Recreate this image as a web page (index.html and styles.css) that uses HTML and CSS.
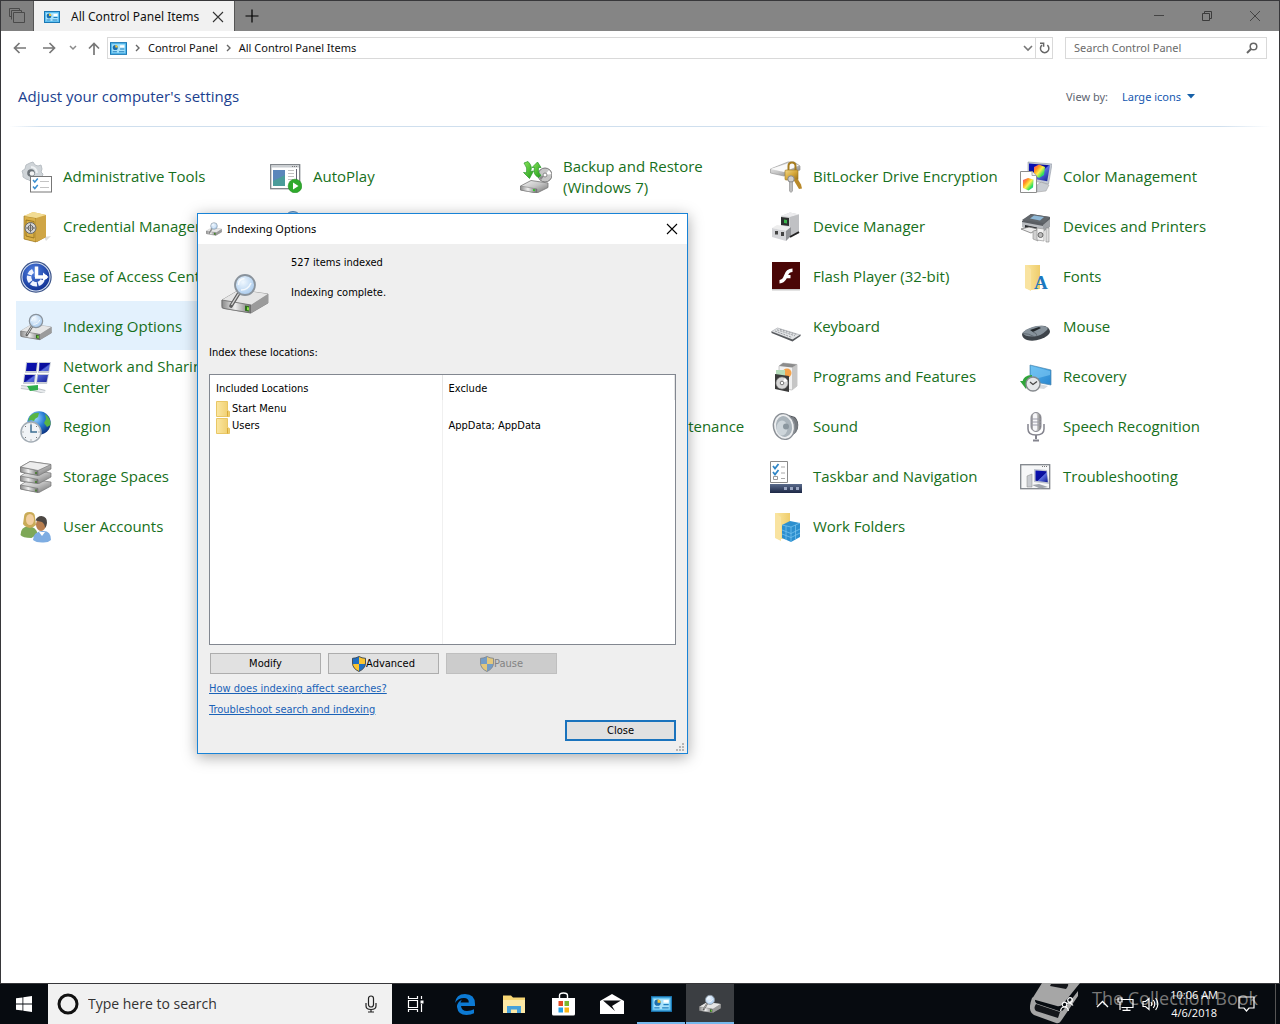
FILE: index.html
```html
<!DOCTYPE html>
<html lang="en">
<head>
<meta charset="utf-8">
<title>All Control Panel Items</title>
<link rel="stylesheet" href="styles.css">
</head>
<body>

<svg class="sprite" width="0" height="0" aria-hidden="true">
  <defs>
    <linearGradient id="g-metal" x1="0" y1="0" x2="1" y2="1"><stop offset="0" stop-color="#f6f6f6"/><stop offset=".5" stop-color="#c4c4c4"/><stop offset="1" stop-color="#6f6f6f"/></linearGradient>
    <linearGradient id="g-side" x1="0" y1="0" x2="1" y2="0"><stop offset="0" stop-color="#8a8a8a"/><stop offset=".45" stop-color="#efefef"/><stop offset="1" stop-color="#707070"/></linearGradient>
    <radialGradient id="g-lens" cx=".4" cy=".35" r=".7"><stop offset="0" stop-color="#f0f8ff"/><stop offset="1" stop-color="#a5c8ec"/></radialGradient>
    <linearGradient id="g-gold" x1="0" y1="0" x2="1" y2="1"><stop offset="0" stop-color="#f3d98a"/><stop offset=".5" stop-color="#d7a93c"/><stop offset="1" stop-color="#9a7019"/></linearGradient>
    <radialGradient id="g-blue" cx=".4" cy=".3" r=".8"><stop offset="0" stop-color="#4f7fe0"/><stop offset="1" stop-color="#0b2a8c"/></radialGradient>
    <linearGradient id="g-screen" x1="0" y1="0" x2="1" y2="1"><stop offset="0" stop-color="#0a10b8"/><stop offset=".5" stop-color="#0a0f9a"/><stop offset=".55" stop-color="#5a6ee0"/><stop offset="1" stop-color="#101a90"/></linearGradient>
    <radialGradient id="g-globe" cx=".35" cy=".3" r=".75"><stop offset="0" stop-color="#9fd8ff"/><stop offset=".5" stop-color="#2a7fd6"/><stop offset="1" stop-color="#0c3280"/></radialGradient>
    <linearGradient id="g-green" x1="0" y1="0" x2="1" y2="1"><stop offset="0" stop-color="#8be85a"/><stop offset="1" stop-color="#1f9a1a"/></linearGradient>
    <linearGradient id="g-folder" x1="0" y1="0" x2="1" y2="0"><stop offset="0" stop-color="#fbe7a2"/><stop offset="1" stop-color="#efcd6c"/></linearGradient>
    <linearGradient id="g-rgb" x1="0" y1="0" x2="1" y2="1"><stop offset="0" stop-color="#ff3b8a"/><stop offset=".3" stop-color="#ff9a1e"/><stop offset=".5" stop-color="#fff04a"/><stop offset=".75" stop-color="#2fe05a"/><stop offset="1" stop-color="#1fb0ff"/></linearGradient>
    <linearGradient id="g-sky" x1="0" y1="0" x2="1" y2="1"><stop offset="0" stop-color="#56b8f0"/><stop offset="1" stop-color="#2a86cf"/></linearGradient>
    <linearGradient id="g-bar" x1="0" y1="0" x2="0" y2="1"><stop offset="0" stop-color="#5a6b8c"/><stop offset="1" stop-color="#1c2745"/></linearGradient>
  </defs>

  <symbol id="i-panel" viewBox="0 0 16 12">
    <rect x=".5" y=".5" width="15" height="11" fill="#5cc0f2" stroke="#1b78b4"/>
    <rect x="2" y="2" width="12" height="8" fill="#a8e2fb"/>
    <circle cx="5" cy="5" r="2.400" fill="#1d6fae"/><path d="M5 5V2.600A2.400 2.400 0 0 1 7.400 5z" fill="#f4c73a"/>
    <path d="M9.500 3h4v2h-4z" fill="#fff"/><path d="M9.500 6.500h4M2.500 9h4M8.500 9h5" stroke="#1f7fbe"/>
  </symbol>
  <symbol id="i-index" viewBox="0 0 48 42">
    <path d="M1 27L18 17l29 4v9L30 40 1 35z" fill="url(#g-metal)" stroke="#777" stroke-width=".7"/>
    <path d="M1 27l29 5 17-11-29-4z" fill="#e6e6e6"/>
    <path d="M1 27l29 5v8L3 35.500Q1 35 1 33z" fill="url(#g-side)" stroke="#6b6b6b" stroke-width=".8"/>
    <path d="M30 32l17-11v9L30 40z" fill="#9b9b9b"/>
    <path d="M24 32.500l4 .8v5.200l-4-.8z" fill="#2d6e1c"/><path d="M26 34l2 .4v3l-2-.4z" fill="#8be04a"/>
    <path d="M18 20L10 33" stroke="#5e5e5e" stroke-width="3.600" stroke-linecap="round"/><path d="M18 20L10.500 32" stroke="#d5d5d5" stroke-width="1.400"/>
    <circle cx="24" cy="12" r="10" fill="url(#g-lens)" stroke="#8a939c" stroke-width="1.800"/>
    <path d="M17.500 12q0-6 6-6.500M20 17q7 0 10-7" fill="none" stroke="#fff" stroke-width="1.500" opacity=".8"/>
  </symbol>
  <symbol id="i-shield" viewBox="0 0 14 16">
    <path d="M7 .5Q10 2.300 13.500 2.300V7q0 5.500-6.500 8.500Q.5 12.500.5 7V2.300Q4 2.300 7 .5z" fill="#1f6fc4"/>
    <path d="M7 .5Q10 2.300 13.500 2.300V8H7zM7 8v7.500Q1 12.800.5 8z" fill="#fbc531"/>
    <path d="M7 .5Q10 2.300 13.500 2.300V7q0 5.500-6.500 8.500Q.5 12.500.5 7V2.300Q4 2.300 7 .5z" fill="none" stroke="#3c4650" stroke-width=".9"/>
  </symbol>
  <symbol id="i-folder" viewBox="0 0 14 16">
    <path d="M.5.5h11v9l2 1v5H.5z" fill="url(#g-folder)" stroke="#e9c765"/><path d="M11.500 10v5.500" stroke="#d9aa37"/>
  </symbol>
</svg>

<main class="window">
  <header class="titlebar">
    <button class="tab-set" aria-label="Tabs set aside">
      <svg width="18" height="16" viewBox="0 0 18 16" fill="none" stroke="#4a4a4a"><path d="M5.500 4.500h11v10h-11zM3.500 11.500v-9h10v2M3.500 8.500h-2v-8h10v2"/></svg>
    </button>
    <div class="tab">
      <svg width="16" height="12"><use href="#i-panel"/></svg>
      <span class="tab-name">All Control Panel Items</span>
      <button class="plain" aria-label="Close tab"><svg width="12" height="12" viewBox="0 0 12 12" stroke="#333" stroke-width="1.100"><path d="M1 1l10 10M11 1L1 11"/></svg></button>
    </div>
    <button class="plain new-tab" aria-label="New tab"><svg width="14" height="14" viewBox="0 0 14 14" stroke="#000" stroke-width="1.200"><path d="M7 .5v13M.5 7h13"/></svg></button>
    <div class="caption">
      <button class="plain" aria-label="Minimize"><svg width="12" height="12" viewBox="0 0 12 12" stroke="#444"><path d="M1 5.500h10"/></svg></button>
      <button class="plain" aria-label="Restore"><svg width="12" height="12" viewBox="0 0 12 12" fill="none" stroke="#3c3c3c"><path d="M1.500 3.500h7v7h-7zM3.500 3.500v-2h7v7h-2"/></svg></button>
      <button class="plain" aria-label="Close"><svg width="12" height="12" viewBox="0 0 12 12" stroke="#444"><path d="M1 1l10 10M11 1L1 11"/></svg></button>
    </div>
  </header>

  <nav class="navbar">
    <div class="nav-buttons">
      <button class="plain" aria-label="Back"><svg width="14" height="12" viewBox="0 0 14 12" fill="none" stroke="#777" stroke-width="1.700"><path d="M13 6H1.500M6.500 1l-5 5 5 5"/></svg></button>
      <button class="plain" aria-label="Forward"><svg width="14" height="12" viewBox="0 0 14 12" fill="none" stroke="#777" stroke-width="1.700"><path d="M1 6h11.500M7.500 1l5 5-5 5"/></svg></button>
      <button class="plain" aria-label="Recent"><svg width="8" height="6" viewBox="0 0 8 6" fill="none" stroke="#8a8a8a" stroke-width="1.500"><path d="M1 1l3 3 3-3"/></svg></button>
      <button class="plain" aria-label="Up"><svg width="12" height="13" viewBox="0 0 12 13" fill="none" stroke="#777" stroke-width="1.700"><path d="M6 13V1.500M1 6.500l5-5 5 5"/></svg></button>
    </div>
    <div class="address">
      <svg width="17" height="13"><use href="#i-panel"/></svg>
      <svg width="5" height="8" viewBox="0 0 5 8" fill="none" stroke="#666" stroke-width="1.400"><path d="M1 1l3 3-3 3"/></svg>
      <a href="#panel">Control Panel</a>
      <svg width="5" height="8" viewBox="0 0 5 8" fill="none" stroke="#666" stroke-width="1.400"><path d="M1 1l3 3-3 3"/></svg>
      <a href="#all">All Control Panel Items</a>
      <button class="plain address-drop" aria-label="Previous locations"><svg width="10" height="7" viewBox="0 0 10 7" fill="none" stroke="#777" stroke-width="1.600"><path d="M1 1l4 4 4-4"/></svg></button>
      <button class="plain refresh" aria-label="Refresh"><svg width="11" height="12" viewBox="0 0 11 12" fill="none" stroke="#666" stroke-width="1.500"><path d="M8.300 3.200A4.200 4.200 0 1 1 3 3.200"/><path d="M1 1.200h3.600v3.600"/></svg></button>
    </div>
    <div class="search">
      <input type="text" placeholder="Search Control Panel" aria-label="Search Control Panel">
      <svg width="12" height="12" viewBox="0 0 12 12" fill="none" stroke="#666" stroke-width="1.500"><circle cx="7.500" cy="4.500" r="3.300"/><path d="M5 7L1 11" stroke-width="2"/></svg>
    </div>
  </nav>

  <div class="heading">
    <h1>Adjust your computer's settings</h1>
    <label for="view">View by:</label>
    <select id="view"><option>Large icons</option><option>Small icons</option><option>Category</option></select>
    <svg width="8" height="5" viewBox="0 0 8 5"><path d="M0 0h8L4 4.500z" fill="#1660a8"/></svg>
  </div>

  <ul class="items">
    <li><a href="#tools"><svg viewBox="0 0 32 32"><path d="M10 2l3-1 2 3 3 1 3-1 1 4-1 3 2 2-1 3-4 1-2 4-4 1-3-3-3-1-3-2 0-3-1-3 3-2 1-4z" fill="#cfd4d8" stroke="#b9bfc4"/><path d="M11 6q5 0 6 6" fill="none" stroke="#eef1f3" stroke-width="2"/><circle cx="11" cy="12" r="3.800" fill="#6d7479"/><circle cx="12" cy="12.500" r="2.300" fill="#f4f4f4"/><rect x="10.500" y="15.500" width="21" height="15.500" fill="#fff" stroke="#777"/><path d="M13 19l1.800 2 3-3.500M13 25.500l1.800 2 3-3.500" fill="none" stroke="#3b8fd0" stroke-width="1.500"/><path d="M20 20.500h9M20 26.500h9" stroke="#c3c3c3"/></svg><span>Administrative Tools</span></a></li>
    <li><a href="#autoplay"><svg viewBox="0 0 32 32"><rect x=".7" y="3.700" width="29" height="24" fill="#fff" stroke="#7d8287" stroke-width="1.300"/><path d="M1 5.500h28" stroke="#c8ccd0" stroke-width="2"/><path d="M22 5.500h6" stroke="#777" stroke-dasharray="1 1"/><rect x="3" y="9" width="12" height="16" fill="#4a9c9a"/><path d="M3 9h12v5L3 20z" fill="#5a86bb"/><path d="M18 9.500h6M18 12.500h6M18 15.500h6M18 18.500h5" stroke="#c2c2c2"/><path d="M26.500 8v12" stroke="#667"/><circle cx="25" cy="25" r="6.800" fill="#2eaa2c" stroke="#1d8c1c" stroke-width=".6"/><path d="M23 21.500v7l5.500-3.500z" fill="#fff"/></svg><span>AutoPlay</span></a></li>
    <li><a href="#backup"><svg viewBox="0 0 32 32"><circle cx="25" cy="14" r="7" fill="#c6c6c6" stroke="#777"/><path d="M25 14l4-5 2.500 4z" fill="#fff"/><path d="M25 14l-4 5-2-3z" fill="#8a8a8a"/><circle cx="25" cy="14" r="2" fill="#fff" stroke="#888"/><path d="M.5 25L11 19.500l17 2.500v4.500L17 32 .5 29z" fill="url(#g-metal)" stroke="#777" stroke-width=".8"/><path d="M.5 25l16.500 3V32L.5 29z" fill="url(#g-side)" stroke="#777" stroke-width=".5"/><path d="M13 28l2 .3v2l-2-.3z" fill="#35c22b"/><path d="M4 2L8 .5q5 5 2.500 10l3-.5-4 7.500-6-6 3 .3Q8 7 4 2z" fill="url(#g-green)" stroke="#27952a" stroke-width=".7"/><path d="M18.500 16.500q-6-3-4-10h-2.500L17.500 1 21 6.500h-2.500q-1 5 2.500 8z" fill="url(#g-green)" stroke="#27952a" stroke-width=".7"/></svg><span>Backup and Restore<br>(Windows 7)</span></a></li>
    <li><a href="#bitlocker"><svg viewBox="0 0 32 32"><path d="M.5 8L18 1h6l6 4v4L14 15 .5 12z" fill="url(#g-metal)" stroke="#999" stroke-width=".7"/><path d="M.5 8L14 11 29 4.500 21 1.500z" fill="#fafafa"/><path d="M18.500 11V5q0-3.500 3.500-3.500T25.500 5v6" fill="none" stroke="#a67c1e" stroke-width="2"/><rect x="15" y="9" width="13" height="10" rx="1" fill="url(#g-gold)" stroke="#9a7418" stroke-width=".6"/><path d="M23 18l6 10 3-.5-1-4-3-5z" fill="#b9892a"/><circle cx="21" cy="18" r="3.200" fill="#cfcfcf" stroke="#888"/><path d="M19.500 21h3v9l-1.500 1.500-1.500-1.500z" fill="#bcbcbc" stroke="#888" stroke-width=".6"/></svg><span>BitLocker Drive Encryption</span></a></li>
    <li><a href="#color"><svg viewBox="0 0 32 32"><path d="M8 1l24 2-3.500 20L8 19z" fill="#c4cad4" stroke="#9299a5" stroke-width=".6"/><path d="M9 2.500l21 1.800-2.800 16L9 17z" fill="url(#g-screen)"/><path d="M14 6l5-2.500L25 6l-1 8-5 3-5-3z" fill="url(#g-rgb)"/><path d="M17 24l4-3 8 3-3 6-9 1z" fill="#c9cdd2" stroke="#999" stroke-width=".5"/><path d="M.5 10.500H12l4.500 4v17H.5z" fill="#fff" stroke="#8d8d8d"/><path d="M12 10.500v4h4.500" fill="#eee" stroke="#aaa"/><path d="M3 19l5-2 5.500 1.500-.5 8-4.500 3L3 27z" fill="url(#g-rgb)"/></svg><span>Color Management</span></a></li>

    <li><a href="#credential"><svg viewBox="0 0 32 32"><path d="M24 26l7-1-5 5z" fill="#ddd"/><path d="M4 5l9-4 13 3v22l-9 5-13-3z" fill="url(#g-gold)"/><path d="M4 5l12 2v24L4 28z" fill="#d9b048" stroke="#8e6a18" stroke-width=".6"/><path d="M16 7l10-3v22l-10 5z" fill="#cfa545"/><path d="M4 5l9-4 13 3-10 3z" fill="#f2dc93"/><path d="M6 9l8 1.500V27L6 25z" fill="none" stroke="#8e6a18" stroke-width=".8"/><circle cx="10.500" cy="17" r="5.500" fill="#d5d5d5" stroke="#666"/><circle cx="10.500" cy="17" r="2.500" fill="#fff" stroke="#555"/><path d="M10.500 12.500v9M6 17h9" stroke="#666"/></svg><span>Credential Manager</span></a></li>
    <li><a href="#clock" aria-label="Clock"><svg viewBox="0 0 32 32"><circle cx="23" cy="9" r="8.500" fill="#9dc7ec" stroke="#4f86b8"/><circle cx="23" cy="9" r="6" fill="#fff"/></svg></a></li>
    <li></li>
    <li><a href="#device"><svg viewBox="0 0 32 32"><path d="M11 5l9-3.500 9 2v19l-8 3-10-3z" fill="#cfd0d2"/><path d="M11 5l9-3.500 9 2L20 6z" fill="#ececee"/><path d="M20 6l9-2.500v19l-9 3z" fill="#c0c1c4"/><path d="M11 6l8 1v8l-8-1z" fill="#2c2f2e"/><path d="M14 8.500l3 .4v3.500l-3-.4z" fill="#39b54a"/><path d="M2 17l5-3 14 2-5 4z" fill="#eee"/><path d="M2 17l14 3v10L2 26z" fill="#d5d6d9"/><path d="M16 20l5-4v9l-5 5z" fill="#909296"/><path d="M5 20h3v3.500H5zM11 21h3v4h-3z" fill="#444"/><path d="M20 26l9-5" stroke="#222" stroke-width="2"/></svg><span>Device Manager</span></a></li>
    <li><a href="#printers"><svg viewBox="0 0 32 32"><path d="M2 10l9-7 19 3v9l-7 5-21-4z" fill="#5a5e63"/><path d="M2 9l9-6 19 3-6 6z" fill="#62676c"/><path d="M10 7.500l4-3 10 1.500-4 3.500z" fill="#8fb8d6"/><path d="M2 11l21 4v5L2 16z" fill="#b9bcc0"/><path d="M5 14l12 2.500v3L5 17z" fill="#26292c"/><path d="M1 18l8-2 9 2-7 4z" fill="#ededed" stroke="#777" stroke-width=".8"/><path d="M23 14l7-6v8l-7 5z" fill="#9fa2a6"/><path d="M13 20l5-1v11l-5-2z" fill="#d0d0d0" stroke="#888" stroke-width=".6"/><path d="M17 17l7 1v12l-7-1z" fill="#f2f2f2" stroke="#999" stroke-width=".7"/><circle cx="20.500" cy="24" r="2.500" fill="#bbb" stroke="#666"/><path d="M26 17h3v14h-3z" fill="#dedede" stroke="#888" stroke-width=".6"/></svg><span>Devices and Printers</span></a></li>

    <li><a href="#ease"><svg viewBox="0 0 32 32"><circle cx="16" cy="16" r="15.700" fill="#3a5288"/><circle cx="16" cy="16" r="14.500" fill="#dce6f5"/><circle cx="16" cy="16" r="13.500" fill="url(#g-blue)"/><path d="M22.500 19A7 7 0 1 1 13 10" fill="none" stroke="#f0f4ff" stroke-width="4.500" stroke-dasharray="6 1.200"/><path d="M16.500 16V5.500M15 16H27" stroke="#fff" stroke-width="3.500"/><path d="M23 11.500l5.500 4.500-5.500 4.500z" fill="#fff"/></svg><span>Ease of Access Center</span></a></li>
    <li></li>
    <li></li>
    <li><a href="#flash"><svg viewBox="0 0 32 32"><rect x="2" y="2" width="28" height="27.500" fill="#c8c8c8"/><rect x="2" y="1" width="28" height="27" fill="#4a0606"/><path d="M22.500 7.500v3.600q-3.200 0-4.300 2.900h2.300v3.300h-3.700Q14.500 22 9.500 22.500V19q3.200-.4 4.500-4.500 2-7 8.500-7z" fill="#fff"/></svg><span>Flash Player (32-bit)</span></a></li>
    <li><a href="#fonts"><svg viewBox="0 0 32 32"><path d="M5 4h15v24l-9 1-6-2z" fill="url(#g-folder)"/><path d="M5 4l6 4v22l-6-3z" fill="#f9e3a0"/><text x="14" y="28" font-family="Liberation Serif, serif" font-weight="bold" font-size="19" fill="#1c78c0">A</text></svg><span>Fonts</span></a></li>

    <li><a class="current" href="#indexing"><svg viewBox="0 0 48 42"><use href="#i-index" width="48" height="42"/></svg><span>Indexing Options</span></a></li>
    <li></li>
    <li></li>
    <li><a href="#keyboard"><svg viewBox="0 0 32 32"><path d="M1.500 20.500l6-3.500 23 7-8 5z" fill="#e2e4e6" stroke="#a0a3a8" stroke-width=".6"/><path d="M1.500 20.500l21 8 8-5V25l-8 5.500-21-8.500z" fill="#55585c"/><path d="M5 20l17 6.500M7 18.800l18 6M10 18.300l17 5.200" stroke="#9a9da2" stroke-width="1" stroke-dasharray="2 1"/></svg><span>Keyboard</span></a></li>
    <li><a href="#mouse"><svg viewBox="0 0 32 32"><path d="M2 23q1-3 9-6t14-2q5 2 5 6-1 4-9 7-8 3-14 1-5-2-5-6z" fill="#3e444a"/><path d="M2.500 22q3-4 10-6t13-.5Q29 17 27 19q-6 6-13 6.500Q5 26 2.500 22z" fill="#87929b"/><path d="M10 19l9-3 2 1-8 4z" fill="#23282c"/><path d="M3 22.500q6 0 11 3M13 21q4 1 4 4" fill="none" stroke="#59626a" stroke-width=".8"/></svg><span>Mouse</span></a></li>

    <li><a href="#network"><svg viewBox="0 0 32 32"><g fill="#c7ccd6"><path d="M6 1h12l-1 11H5zM19 1h12l-2 11H18zM4 13h12l-1 10H3zM17 13h12l-2 10H16z"/></g><g fill="url(#g-screen)"><path d="M7 2h10l-1 8H6zM19.500 2H30l-1.500 8H19zM5 14h10l-1 7H4zM18 14h10l-1.500 7H17z"/></g><path d="M1 26l8 1 16 4" fill="none" stroke="#bfc4c8" stroke-width="4"/><path d="M1 26l8 1 16 4" fill="none" stroke="#e8ebed" stroke-width="2"/><path d="M7 25l11-1v5l-8 1z" fill="#2fae4a"/></svg><span>Network and Sharing<br>Center</span></a></li>
    <li></li>
    <li></li>
    <li><a href="#programs"><svg viewBox="0 0 32 32"><path d="M9 5l4-3 14 1.500V25l-5 4-13-2z" fill="#f0f0f0" stroke="#aaa" stroke-width=".6"/><path d="M22 6l5-2.500V25l-5 4z" fill="#c6c6c6"/><path d="M9 5l13 1.500 5-3L13 2z" fill="#8c8c8c"/><circle cx="17" cy="12" r="4.500" fill="#f5a34a"/><path d="M6 9h9v8H6z" fill="#b5dcb9"/><path d="M5 13l14 2v16L5 28z" fill="#3a3a3a"/><circle cx="12" cy="22" r="6" fill="#d8d8d8" stroke="#888" stroke-width=".6"/><path d="M12 22l3-5 2.500 3z" fill="#fff"/><circle cx="12" cy="22" r="1.800" fill="#fff" stroke="#777"/></svg><span>Programs and Features</span></a></li>
    <li><a href="#recovery"><svg viewBox="0 0 32 32"><path d="M10 4l21 5v15l-21-4z" fill="url(#g-sky)" stroke="#4d87ad" stroke-width=".7"/><path d="M11 5l19 5v4L11 19z" fill="#7fcaf5" opacity=".6"/><path d="M19 23l9 2-4 3-8-1z" fill="#d6dade"/><path d="M4 22q1-6 8-6" fill="none" stroke="#2fa53a" stroke-width="4"/><path d="M0 20h10l-4 8z" fill="#2fa53a"/><circle cx="13" cy="23" r="7" fill="#e4e7ea" stroke="#85898d" stroke-width="1.300"/><path d="M10 21l3 2.500 4-3" fill="none" stroke="#444" stroke-width="1.200"/></svg><span>Recovery</span></a></li>

    <li><a href="#region"><svg viewBox="0 0 32 32"><circle cx="19" cy="12" r="11.700" fill="url(#g-globe)"/><path d="M10 5q4-4 9-3l-1 4-3 2-1 2-3-1-3 1zM25 3q6 4 5.500 11L27 16l-3-4 2-4z" fill="#58b544"/><circle cx="11" cy="21" r="10" fill="#f0f3f6" stroke="#a3acb4" stroke-width="1.500"/><path d="M11 13.500V21h6" fill="none" stroke="#3d6f92" stroke-width="1.500"/><path d="M11 12.500v1M11 28.500v1M2.500 21h1M18.500 21h1M5 15l1 1M16 26l1 1M17 15l-1 1M6 26l-1 1" stroke="#777"/></svg><span>Region</span></a></li>
    <li></li>
    <li><a href="#maintenance"><svg viewBox="0 0 32 32"></svg><span>Security and Maintenance</span></a></li>
    <li><a href="#sound"><svg viewBox="0 0 32 32"><path d="M15 3l10 3q4 4 3 11-2 5-7 8l-8 3z" fill="#4c5054"/><path d="M22 5q6 3 6 10t-6 9z" fill="#777b80"/><ellipse cx="14" cy="15.500" rx="10.500" ry="13" fill="#eceef0" stroke="#8b9096" stroke-width="1.400" transform="rotate(-12 14 15.500)"/><ellipse cx="14" cy="15.500" rx="8" ry="10.500" fill="#aab4bb" transform="rotate(-12 14 15.500)"/><ellipse cx="12" cy="17" rx="5.500" ry="7.500" fill="#cdd5da"/><circle cx="16" cy="15.500" r="3" fill="#8b979f"/></svg><span>Sound</span></a></li>
    <li><a href="#speech"><svg viewBox="0 0 32 32"><rect x="11" y="1.500" width="10" height="19" rx="5" fill="url(#g-side)" stroke="#8a8a93"/><rect x="13" y="2.500" width="4" height="17" rx="2" fill="#f7f7fa"/><path d="M11 8h10M11 11h10M11 14h10" stroke="#9a9aa6"/><path d="M8 13v5q0 6 8 6t8-6v-5" fill="none" stroke="#84848e" stroke-width="1.500"/><path d="M16 24v4M13 29.500h6" stroke="#84848e" stroke-width="2"/></svg><span>Speech Recognition</span></a></li>

    <li><a href="#storage"><svg viewBox="0 0 32 32"><g stroke="#777" stroke-width=".7"><path d="M.5 24L10 18l21 3v4l-12 6.500L.5 28z" fill="url(#g-metal)"/><path d="M.5 24L18 27.500v4L.5 28z" fill="url(#g-side)"/><path d="M.5 15L10 9l21 3v4l-12 6.500L.5 20z" fill="url(#g-metal)"/><path d="M.5 15L18 18.500v4L.5 20z" fill="url(#g-side)"/><path d="M.5 6L10 .5l21 3V8l-12 6.500L.5 11z" fill="url(#g-metal)"/><path d="M.5 6L18 9.500v5L.5 11z" fill="url(#g-side)"/><path d="M.5 6L10 .5l21 3L18 9.500z" fill="#ededed"/></g><path d="M16 11v2M16 20v2M16 28.500v2" stroke="#3f7a24" stroke-width="1.500"/></svg><span>Storage Spaces</span></a></li>
    <li></li>
    <li></li>
    <li><a href="#taskbar"><svg viewBox="0 0 32 32"><path d="M.5.5h17v21H.5z" fill="#fff" stroke="#8a8a8a"/><path d="M3 5l2 2.500L8.500 3M3 11l2 2.500L8.500 9" fill="none" stroke="#2f86c6" stroke-width="1.800"/><path d="M3.500 15.500h4v3h-4z" fill="none" stroke="#999"/><path d="M11 6h4M11 12h4M11 17.500h4" stroke="#aaa"/><rect y="23" width="32" height="9" fill="url(#g-bar)"/><path d="M14 27.500h3M20 27.500h3M26 27.500h3" stroke="#9aa6c2" stroke-width="3"/></svg><span>Taskbar and Navigation</span></a></li>
    <li><a href="#troubleshooting"><svg viewBox="0 0 32 32"><rect x=".7" y="3.700" width="29" height="24" fill="#f6f7f8" stroke="#80858b" stroke-width="1.300"/><path d="M22 5.500h6" stroke="#777" stroke-dasharray="1 1"/><path d="M7 15l5-2v13H7z" fill="#c8cbd0" stroke="#888" stroke-width=".5"/><path d="M14 8l13 1 2 14-15-2z" fill="#c0c5cf"/><path d="M15.500 9.500l11 .8 1.300 11-12.300-1.500z" fill="url(#g-screen)"/><path d="M12 24l7-1 9 3-8 1.500z" fill="#9fa4ab"/></svg><span>Troubleshooting</span></a></li>

    <li><a href="#users"><svg viewBox="0 0 32 32"><path d="M.5 24q0-8 8-9 8 1 9 8l-6 4q-9 0-11-3z" fill="#7ea857"/><path d="M4 6q0-5 5.500-5T15 6l1 8q-3 3-6 3-5-1-7-4z" fill="#c9ab57"/><ellipse cx="10" cy="8.500" rx="4" ry="5.500" fill="#f2cfa0"/><path d="M13 29q0-8 9-9t9 9q-3 3-9 2.500-6 0-9-2.500z" fill="#7eade2"/><ellipse cx="21" cy="13.500" rx="5" ry="6.500" fill="#b97f4f"/><path d="M15.500 9.500Q17 5 21.500 5 27.500 6 27 12q-.5 4-2 5 0-4-3-6-3-1-6.500-1.500z" fill="#4c4743"/><path d="M19 21l3 4 3-4z" fill="#fff"/></svg><span>User Accounts</span></a></li>
    <li></li>
    <li></li>
    <li><a href="#work"><svg viewBox="0 0 32 32"><path d="M5 2h15v25l-9 1-6-2z" fill="url(#g-folder)"/><path d="M5 2l6 4v24l-6-3z" fill="#f9e3a0"/><path d="M12 14l8-4 10 2v14l-9 5-9-4z" fill="#2c8fcf"/><path d="M12 19l9 3.500L30 18M12 23l9 3.500 9-4.500M21 16v15M16 15v14M25.500 14v14M12 14l9 2 9-4" fill="none" stroke="#7cc7f1" stroke-width=".7"/></svg><span>Work Folders</span></a></li>
  </ul>
</main>

<section class="dialog" role="dialog" aria-labelledby="dialog-title">
  <header class="dialog-title">
    <svg width="16" height="14"><use href="#i-index"/></svg>
    <h2 id="dialog-title">Indexing Options</h2>
    <button class="plain" aria-label="Close dialog"><svg width="12" height="12" viewBox="0 0 12 12" stroke="#000" stroke-width="1.100"><path d="M1 1l10 10M11 1L1 11"/></svg></button>
  </header>
  <div class="dialog-body">
    <div class="status">
      <svg width="48" height="42"><use href="#i-index"/></svg>
      <div class="status-text">
        <p>527 items indexed</p>
        <p>Indexing complete.</p>
      </div>
    </div>
    <p id="list-label">Index these locations:</p>
    <table class="locations" aria-labelledby="list-label">
      <thead><tr><th>Included Locations</th><th>Exclude</th></tr></thead>
      <tbody>
        <tr><td><svg width="14" height="16"><use href="#i-folder"/></svg>Start Menu</td><td></td></tr>
        <tr><td><svg width="14" height="16"><use href="#i-folder"/></svg>Users</td><td>AppData; AppData</td></tr>
        <tr class="rest"><td></td><td></td></tr>
      </tbody>
    </table>
    <div class="actions">
      <button class="push">Modify</button>
      <button class="push"><svg width="14" height="16"><use href="#i-shield"/></svg>Advanced</button>
      <button class="push" disabled><svg width="14" height="16"><use href="#i-shield"/></svg>Pause</button>
    </div>
    <div class="links">
      <a href="#how">How does indexing affect searches?</a>
      <a href="#troubleshoot">Troubleshoot search and indexing</a>
    </div>
    <div class="closing"><button class="push default">Close</button></div>
  </div>
  <svg class="grip" width="9" height="9" viewBox="0 0 9 9" fill="#b5b5b5"><path d="M6 0h2v2H6zM3 3h2v2H3zM6 3h2v2H6zM0 6h2v2H0zM3 6h2v2H3zM6 6h2v2H6z"/></svg>
</section>

<footer class="taskbar">
  <button class="plain start" aria-label="Start"><svg width="16" height="16" viewBox="0 0 16 16" fill="#fff"><path d="M0 2.300l6.500-.9v6.200H0zM7.300 1.300L16 0v7.600H7.300zM0 8.400h6.500v6.200L0 13.700zM7.300 8.400H16V16l-8.700-1.300z"/></svg></button>
  <div class="task-search">
    <svg width="22" height="22" viewBox="0 0 22 22" fill="none" stroke="#111" stroke-width="3"><circle cx="11" cy="11" r="9"/></svg>
    <input type="text" placeholder="Type here to search" aria-label="Type here to search">
    <svg width="12" height="18" viewBox="0 0 12 18" fill="none" stroke="#222" stroke-width="1.200"><rect x="3.500" y="1" width="5" height="11" rx="2.500"/><path d="M1 8v3q0 3.500 5 3.500t5-3.500V8M6 14.500V17M3 17h6"/></svg>
  </div>
  <div class="task-buttons">
    <button class="plain" aria-label="Task View"><svg width="18" height="16" viewBox="0 0 18 16" fill="none" stroke="#fff" stroke-width="1.200"><path d="M1.500 4.500h9v7h-9zM1.500 0v2.500h9V0M1.500 16v-2.500h9V16M14.500 0v3M14.500 8v8"/><path d="M13.500 4.500h3v3h-3z" fill="#fff" stroke="none"/></svg></button>
    <button class="plain" aria-label="Edge"><svg width="22" height="22" viewBox="0 0 22 22"><path d="M1 10Q2 1 11 1q10 0 10 10v2H7q.5 5 6 5 4 0 7-1.700v4Q17 22 12.500 22 4 22 3 14q0-5 5-7.500Q6.500 8.500 6.500 9.500h8.300Q14.800 5 10 5 4 5 1 10z" fill="#0c7ad4"/></svg></button>
    <button class="plain" aria-label="File Explorer"><svg width="22" height="20" viewBox="0 0 22 20"><path d="M0 1.500h8l2 2h12V19H0z" fill="#f7d674"/><path d="M0 6h22v13H0z" fill="#fce9a6"/><path d="M4 19v-7h14v7h-4v-3.500H8V19z" fill="#46a2dc"/></svg></button>
    <button class="plain" aria-label="Store"><svg width="23" height="24" viewBox="0 0 23 24"><path d="M7.500 7V3.500q0-2.500 4-2.500t4 2.500V7" fill="none" stroke="#fff" stroke-width="1.400"/><path d="M0 6h23v16q0 1.500-1.500 1.500h-20Q0 23.500 0 22z" fill="#fff"/><path d="M6.500 9h4.500v5H6.500z" fill="#e74a23"/><path d="M12.500 9H17v5h-4.500z" fill="#7cb82f"/><path d="M6.500 15.500h4.500v5H6.500z" fill="#21a0e8"/><path d="M12.500 15.500H17v5h-4.500z" fill="#fcb813"/></svg></button>
    <button class="plain" aria-label="Mail"><svg width="24" height="20" viewBox="0 0 24 20"><path d="M0 7L12 0l12 7v13H0z" fill="#fff"/><path d="M3 6.500h18l-9 5.500 3 5z" fill="#0a0c10"/></svg></button>
    <button class="plain running" aria-label="Control Panel"><svg width="21" height="16"><use href="#i-panel"/></svg></button>
    <button class="plain active" aria-label="Indexing Options"><svg width="22" height="20"><use href="#i-index"/></svg></button>
  </div>
  <div class="brand">
    <svg width="50" height="41" viewBox="0 0 50 41"><path d="M12 0h38L33 21q-3 3-6 2L2 16z" fill="#a6a6a6"/><path d="M21 1h17q1 1-2 5l-16-3z" fill="#14161a"/><path d="M2 15q3-3 3 2 0 3 3 4l21 7q3 1 5-2L48 8v5L31 38q-2 3-5 2L4 32Q-3 28 2 15z" fill="#a6a6a6"/><path d="M6 21l24 8-2 6L6 28q-3-3 0-7z" fill="#14161a"/></svg>
    <span>The Collection Book</span>
  </div>
  <div class="tray">
    <svg width="14" height="15" viewBox="0 0 14 15" fill="none" stroke="#fff" stroke-width="1.200"><circle cx="10" cy="3" r="2.300"/><circle cx="4.500" cy="7.500" r="2.300"/><path d="M.7 14q0-4 3.800-4t3.800 4M7 6.500q3-2 6 2"/></svg>
    <svg width="13" height="8" viewBox="0 0 13 8" fill="none" stroke="#fff" stroke-width="1.300"><path d="M1 7l5.500-5.500L12 7"/></svg>
    <svg width="17" height="14" viewBox="0 0 17 14" fill="none" stroke="#fff" stroke-width="1.200"><path d="M4 2.500h12v8H4.500M10 10.500v3M5.500 13.400h8M1 1h4v4H1zM3 5v8"/></svg>
    <svg width="17" height="14" viewBox="0 0 17 14" fill="none" stroke="#fff" stroke-width="1.200"><path d="M1 4.500h2.500L7 1.500v11L3.500 9.500H1zM9 5q1.500 2 0 4M11.300 3q3 4 0 8M13.600 1q4.500 6 0 12"/></svg>
    <p class="clock">10:06 AM<br>4/6/2018</p>
    <svg class="notice" width="17" height="16" viewBox="0 0 17 16" fill="none" stroke="#fff" stroke-width="1.200"><path d="M1 1h15v11h-5l-2.500 3L6 12H1z"/></svg>
  </div>
</footer>

</body>
</html>
```
FILE: styles.css
```css
* { box-sizing: border-box; }

body {
  margin: 0;
  min-height: 100vh;
  display: flex;
  flex-direction: column;
  position: relative;
  background: #fff;
  color: #111;
  font: 11px/14px "Noto Sans", "Open Sans", sans-serif;
}

h1, h2, p, ul { margin: 0; padding: 0; font-weight: 400; }
svg { display: block; flex: none; }
.sprite { position: absolute; }

button, input, select { font: inherit; color: inherit; }

.plain {
  display: flex;
  align-items: center;
  justify-content: center;
  border: 0;
  padding: 0;
  background: none;
}

/* Explorer window */
.window {
  flex: 1;
  border: 1px solid #37373a;
}

.titlebar {
  display: flex;
  height: 30px;
  background: #858585;
}

.tab-set {
  display: flex;
  align-items: center;
  justify-content: center;
  width: 33px;
  padding: 0;
  border: 0;
  border-right: 1px solid #555;
  background: #808080;
}

.tab {
  display: flex;
  align-items: center;
  width: 200px;
  padding: 2px 10px 0;
  background: #f1f1f1;
  font-size: 12px;
}

.tab-name { flex: 1; margin-left: 11px; white-space: nowrap; }

.new-tab { width: 34px; border-left: 1px solid #555; }

.caption { display: flex; margin-left: auto; }
.caption button { width: 48px; }

.navbar {
  display: flex;
  align-items: center;
  height: 34px;
  padding: 0 12px;
}

.nav-buttons { display: flex; gap: 15px; margin-right: 7px; }
.nav-buttons button:nth-child(3) { margin-left: -2px; }
.nav-buttons button:nth-child(4) { margin-left: -4px; }

.address {
  display: flex;
  align-items: center;
  flex: 1;
  gap: 8px;
  height: 22px;
  padding-left: 2px;
  border: 1px solid #d9d9d9;
}

.address a { color: #111; text-decoration: none; }
.address-drop { margin-left: auto; }
.refresh { width: 17px; height: 20px; margin-left: -6px; border-left: 1px solid #d9d9d9; }

.search {
  display: flex;
  align-items: center;
  width: 202px;
  height: 22px;
  margin-left: 12px;
  padding: 0 8px;
  border: 1px solid #d9d9d9;
}

.search input, .task-search input {
  flex: 1;
  min-width: 0;
  border: 0;
  padding: 0;
  outline: 0;
  background: none;
}

.search input::placeholder { color: #6b6b6b; opacity: 1; }

.heading {
  display: flex;
  align-items: center;
  height: 61px;
  padding: 2px 84px 0 17px;
}

.heading h1 {
  flex: 1;
  color: #1b3f8f;
  font: 15px/21px "Open Sans", sans-serif;
}

.heading label { color: #5d6470; }

.heading select {
  appearance: none;
  margin: 0 5px 0 14px;
  padding: 0;
  border: 0;
  background: none;
  color: #1558b0;
}

.items {
  display: grid;
  grid-template-columns: repeat(auto-fill, 250px);
  grid-auto-rows: 50px;
  padding: 25px 0 25px 15px;
  list-style: none;
  position: relative;
}

.items::before {
  content: "";
  position: absolute;
  inset: 0 0 auto;
  height: 1px;
  background: linear-gradient(90deg, #fff 8px, #cfdfee 40px calc(100% - 60px), #fff calc(100% - 8px));
}

.items a {
  display: flex;
  align-items: center;
  gap: 11px;
  height: 49px;
  padding: 2px 0 0 4px;
  color: #176f20;
  font: 15px/21px "Open Sans", sans-serif;
  text-decoration: none;
  white-space: nowrap;
}

.items svg { width: 32px; height: 32px; }
.items .current { background: #e3f1fd; }

/* Indexing Options dialog */
.dialog {
  position: absolute;
  left: 197px;
  top: 213px;
  width: 491px;
  border: 1px solid #1883d7;
  background: #efefef;
  box-shadow: 0 3px 14px rgba(0, 0, 0, .35);
  color: #000;
}

.dialog-title {
  display: flex;
  align-items: center;
  height: 30px;
  padding: 0 9px 0 8px;
  background: #fff;
}

.dialog-title h2 { flex: 1; margin-left: 5px; font-size: 11px; }

.dialog-body {
  padding: 12px 11px;
  font-family: "DejaVu Sans Condensed", "DejaVu Sans", sans-serif;
}

.status { display: flex; min-height: 90px; }
.status > svg { margin: 17px 22px 0 12px; }
.status-text { display: grid; gap: 16px; align-content: start; }

.locations {
  width: 100%;
  height: 271px;
  margin: 14px 0 8px;
  border: 1px solid #828790;
  border-spacing: 0;
  table-layout: fixed;
  background: #fff;
}

.locations th, .locations td {
  height: 17px;
  padding: 0 6px;
  font-weight: 400;
  text-align: left;
}

.locations th { height: 25px; padding-top: 2px; border-right: 1px solid #e5e5e5; }
.locations td:first-child { border-right: 1px solid #f0f0f0; }
.locations td svg { display: inline-block; vertical-align: middle; margin-right: 2px; }
.locations .rest td { height: auto; }

.actions { display: flex; gap: 7px; padding-left: 1px; }

.push {
  display: flex;
  align-items: center;
  justify-content: center;
  width: 111px;
  height: 21px;
  padding: 1px 0 0;
  border: 1px solid #adadad;
  background: #e1e1e1;
}

.push:disabled { border-color: #bfbfbf; background: #ccc; color: #838383; }
.push:disabled svg { opacity: .5; }
.push.default { border: 2px solid #1a73bd; }

.links {
  display: grid;
  gap: 7px;
  justify-items: start;
  margin: 8px 0 3px;
}

.links a { color: #1a62b7; }

.closing { display: flex; justify-content: flex-end; }

.grip { position: absolute; right: 2px; bottom: 1px; }

/* Taskbar */
.taskbar {
  display: flex;
  position: relative;
  height: 40px;
  background: #070b10;
}

.start { width: 48px; }

.task-search {
  display: flex;
  align-items: center;
  width: 344px;
  padding: 0 15px 0 9px;
  background: #f1f1f1;
  font: 14px/20px "Open Sans", sans-serif;
}

.task-search input { margin-left: 9px; }
.task-search input::placeholder { color: #333; opacity: 1; }

.task-buttons { display: flex; gap: 1px; }
.task-buttons button { width: 48px; }
.task-buttons .running { box-shadow: inset 0 -2px #76b9ed; }
.task-buttons .active { background: #3b3e42; box-shadow: inset 0 -2px #76b9ed; }

.tray {
  display: flex;
  position: relative;
  align-items: center;
  margin: 0 4px 0 auto;
  gap: 8px;
  color: #fff;
  border-right: 1px solid #555;
}

.tray svg:first-child { margin-right: 14px; }
.clock { margin-left: 3px; font: 11px/18px "Open Sans", sans-serif; text-align: center; }
.notice { margin: 0 20px 0 12px; }

.brand {
  display: flex;
  align-items: flex-end;
  gap: 12px;
  position: absolute;
  right: 22px;
  bottom: 0;
  color: #777;
  font: 18px/24px "Open Sans", sans-serif;
  pointer-events: none;
}

.brand span { padding-bottom: 14px; }
```
